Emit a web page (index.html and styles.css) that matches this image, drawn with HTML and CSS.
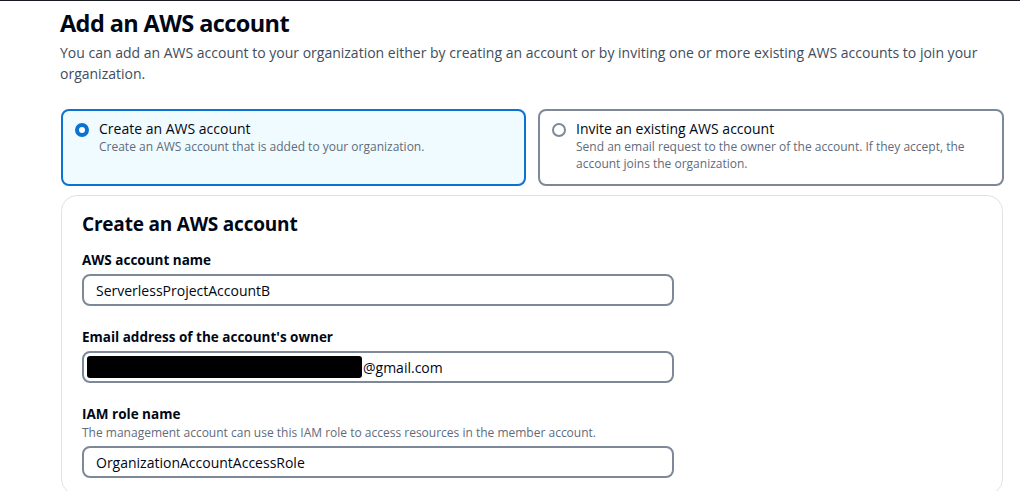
FILE: index.html
```html
<!DOCTYPE html>
<html lang="en">
<head>
<meta charset="utf-8">
<title>Add an AWS account</title>
<link rel="stylesheet" href="styles.css">
</head>
<body>
<div class="topline"></div>
<main class="page">
  <h1 class="title">Add an AWS account</h1>
  <p class="intro">You can add an AWS account to your organization either by creating an account or by inviting one or more existing AWS accounts to join your organization.</p>

  <div class="tiles">
    <label class="tile tile-selected">
      <span class="radio radio-on"></span>
      <span class="tile-text">
        <span class="tile-title">Create an AWS account</span>
        <span class="tile-desc">Create an AWS account that is added to your organization.</span>
      </span>
    </label>
    <label class="tile">
      <span class="radio"></span>
      <span class="tile-text">
        <span class="tile-title">Invite an existing AWS account</span>
        <span class="tile-desc">Send an email request to the owner of the account. If they accept, the account joins the organization.</span>
      </span>
    </label>
  </div>

  <section class="panel">
    <h2 class="panel-title">Create an AWS account</h2>

    <div class="field">
      <div class="label">AWS account name</div>
      <div class="input">ServerlessProjectAccountB</div>
    </div>

    <div class="field">
      <div class="label">Email address of the account's owner</div>
      <div class="input input-email"><span class="redact"></span><span>@gmail.com</span></div>
    </div>

    <div class="field">
      <div class="label">IAM role name</div>
      <div class="hint">The management account can use this IAM role to access resources in the member account.</div>
      <div class="input">OrganizationAccountAccessRole</div>
    </div>
  </section>
</main>
</body>
</html>
```

FILE: styles.css
```css
* { box-sizing: border-box; }
html, body { margin: 0; padding: 0; background: #ffffff; overflow: hidden; }
body {
  font-family: "Open Sans", "Noto Sans", "Liberation Sans", sans-serif;
  color: #000716;
  width: 1024px;
  height: 491px;
}
.topline { height: 1px; background: #16191f; width: 1020px; }
.page { padding: 0 21px 0 60px; }
.title {
  margin: 7px 0 0 0;
  font-size: 23.5px;
  line-height: 30px;
  font-weight: 700;
  letter-spacing: -0.6px;
}
.intro {
  margin: 4px 0 0 0;
  font-size: 14px;
  line-height: 21px;
  color: #414d5c;
}
.tiles {
  margin-top: 25px;
  margin-left: 1px;
  display: grid;
  grid-template-columns: 465px 466px;
  column-gap: 12px;
}
.tile {
  height: 77px;
  border: 2px solid #7d8998;
  border-radius: 8px;
  background: #fff;
  display: flex;
  align-items: flex-start;
  gap: 10px;
  padding: 8px 12px 0 12px;
}
.tile-selected { border-color: #0972d3; background: #f0fbff; }
.radio {
  flex: none;
  width: 14px;
  height: 14px;
  margin-top: 4px;
  border-radius: 50%;
  border: 2px solid #7d8998;
  background: #fff;
}
.radio-on { border: 4px solid #0972d3; }
.tile-text { display: flex; flex-direction: column; }
.tile-title { font-size: 14px; line-height: 19px; color: #000716; }
.tile-desc { font-size: 12px; line-height: 17px; color: #5f6b7a; }
.panel {
  margin-top: 9px;
  margin-left: 1px;
  width: 942px;
  height: 300px;
  border: 1px solid #e0e3e6;
  border-radius: 16px;
  padding: 14px 20px 0 20px;
}
.panel-title {
  margin: 0;
  font-size: 19px;
  line-height: 28px;
  font-weight: 700;
  letter-spacing: -0.2px;
}
.field { margin-top: 12px; }
.field + .field { margin-top: 21px; }
.label { font-size: 13.5px; line-height: 20px; font-weight: 700; }
.hint { font-size: 12px; line-height: 18px; color: #5f6b7a; }
.input {
  margin-top: 4px;
  width: 592px;
  height: 32px;
  border: 2px solid #7d8998;
  border-radius: 8px;
  padding: 0 12px;
  display: flex;
  align-items: center;
  font-size: 14px;
  color: #000716;
}
.input-email { padding-left: 3px; }
.redact {
  display: inline-block;
  width: 275px;
  height: 22px;
  background: #000;
  border-radius: 3px;
  margin-right: 1px;
}
```
